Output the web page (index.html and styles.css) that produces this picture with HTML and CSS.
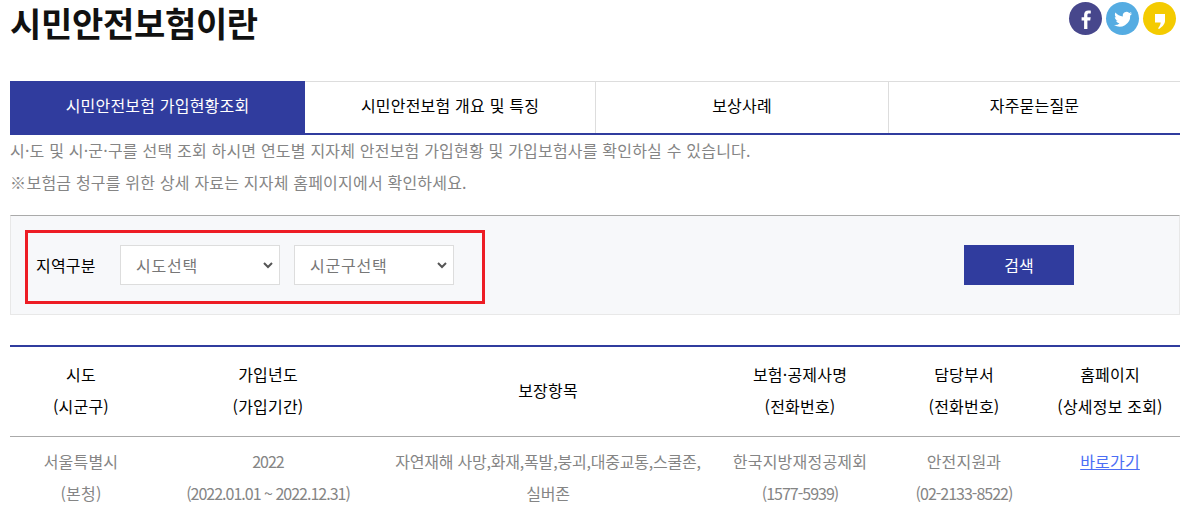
FILE: index.html
```html
<!DOCTYPE html>
<html lang="ko">
<head>
    <meta charset="UTF-8">
    <title>시민안전보험이란</title>
    <link rel="stylesheet" href="styles.css">
</head>
<body>
    <div class="container">
        <!-- Title -->
        <div class="page-head">
            <h1>시민안전보험이란</h1>
            <div class="sns">
                <a class="sns-btn fb" href="#">
                    <svg viewBox="0 0 33 33" width="33" height="33"><path d="M18.400 27v-8.500h2.800l.5-3.300h-3.300v-2c0-1 .3-1.600 1.600-1.600h1.800V8.700c-.4 0-1.400-.1-2.500-.1-2.500 0-4.200 1.500-4.200 4.300v2.300h-2.500v3.300h2.500V27z" fill="#fff"/></svg>
                </a>
                <a class="sns-btn tw" href="#">
                    <svg viewBox="0 0 33 33" width="33" height="33"><path d="M26 11.500c-.7.300-1.400.5-2.100.6.800-.5 1.300-1.200 1.600-2-.7.400-1.500.7-2.300.9a3.700 3.700 0 0 0-6.300 3.400c-3-.2-5.700-1.600-7.500-3.900-.3.600-.5 1.200-.5 1.900 0 1.300.6 2.400 1.600 3.100-.6 0-1.200-.2-1.700-.5 0 1.800 1.300 3.300 3 3.700-.5.100-1.100.2-1.700.1.500 1.500 1.800 2.500 3.400 2.600a7.400 7.400 0 0 1-5.500 1.500 10.500 10.500 0 0 0 16.200-9.300c.7-.5 1.300-1.200 1.800-2.100z" fill="#fff"/></svg>
                </a>
                <a class="sns-btn ks" href="#">
                    <svg viewBox="0 0 33 33" width="33" height="33"><path d="M12 12h10v7c0 3-3 6-6 8l-1-.8c1.500-1.500 2.500-3.500 2.700-5.700H12z" fill="#fff"/></svg>
                </a>
            </div>
        </div>

        <!-- Tabs -->
        <ul class="tabs">
            <li class="tab tab-on">시민안전보험 가입현황조회</li>
            <li class="tab tab-2">시민안전보험 개요 및 특징</li>
            <li class="tab tab-3">보상사례</li>
            <li class="tab tab-4">자주묻는질문</li>
        </ul>

        <div class="desc-box">
            <p class="desc">시·도 및 시·군·구를 선택 조회 하시면 연도별 지자체 안전보험 가입현황 및 가입보험사를 확인하실 수 있습니다.</p>
            <p class="desc"><span class="note-mark">※ </span>보험금 청구를 위한 상세 자료는 지자체 홈페이지에서 확인하세요.</p>
        </div>

        <!-- Search -->
        <form class="search-box">
            <div class="region-mark">
                <label class="region-label">지역구분</label>
                <select class="region-select sel-sido"><option>시도선택</option></select>
                <select class="region-select"><option>시군구선택</option></select>
            </div>
            <button type="button" class="search-btn">검색</button>
        </form>

        <!-- Result table -->
        <table class="result-table">
            <colgroup>
                <col class="c1"><col class="c2"><col class="c3"><col class="c4"><col class="c5"><col class="c6">
            </colgroup>
            <thead>
                <tr>
                    <th>시도<br>(시군구)</th>
                    <th>가입년도<br>(가입기간)</th>
                    <th>보장항목</th>
                    <th>보험·공제사명<br>(전화번호)</th>
                    <th>담당부서<br>(전화번호)</th>
                    <th>홈페이지<br>(상세정보 조회)</th>
                </tr>
            </thead>
            <tbody>
                <tr>
                    <td>서울특별시<br>(본청)</td>
                    <td><span class="num">2022</span><br><span class="num">(2022.01.01 ~ 2022.12.31)</span></td>
                    <td class="items">자연재해 사망,화재,폭발,붕괴,대중교통,스쿨존,<br>실버존</td>
                    <td>한국지방재정공제회<br><span class="num">(1577-5939)</span></td>
                    <td>안전지원과<br><span class="num">(02-2133-8522)</span></td>
                    <td><a href="#">바로가기</a><br>&nbsp;</td>
                </tr>
            </tbody>
        </table>
    </div>
</body>
</html>
```

FILE: styles.css
```css
html, body {
    margin: 0;
    padding: 0;
    background: #fff;
    overflow: hidden;
}

body {
    font-family: "Noto Sans CJK KR", "Noto Sans", sans-serif;
    font-size: 16px;
    letter-spacing: 0.2px;
    color: #000;
}

.container {
    width: 1170px;
    margin-left: 10px;
}

.page-head {
    display: flex;
    justify-content: space-between;
    align-items: flex-start;
    height: 81px;
}

h1 {
    margin: 0;
    font-size: 34px;
    font-weight: 700;
    line-height: 46px;
    letter-spacing: -0.3px;
    color: #111;
}

.sns {
    display: flex;
    gap: 4px;
    margin: 2px 4px 0 0;
}

.sns-btn {
    display: block;
    width: 33px;
    height: 33px;
    border-radius: 50%;
}

.fb { background: #47478c; }
.tw { background: #55ace2; }
.ks { background: #f4cb00; }

.tabs {
    display: flex;
    margin: 0;
    padding: 0;
    list-style: none;
    height: 51px;
    border-top: 1px solid #ddd;
    border-bottom: 2px solid #303c9e;
}

.tab {
    box-sizing: border-box;
    width: 293px;
    line-height: 47px;
    text-align: center;
    border-left: 1px solid #ddd;
}

.tab-on {
    width: 295px;
    margin-top: -1px;
    height: 52px;
    line-height: 48px;
    background: #303c9e;
    color: #fff;
    border-left: 0;
}

.tab-2 { width: 290px; border-left: 0; }
.tab-4 { width: 292px; }

.desc-box {
    height: 64px;
    margin-top: -1px;
}

.desc {
    margin: 0;
    line-height: 32px;
    color: #858585;
}

.note-mark {
    letter-spacing: -2px;
}

.search-box {
    box-sizing: border-box;
    display: flex;
    align-items: flex-start;
    height: 100px;
    margin-top: 17px;
    padding: 14px 0 0 14px;
    background: #f7f8fa;
    border: 1px solid #e8e8e8;
    border-top-color: #aaa;
}

.region-mark {
    box-sizing: border-box;
    display: flex;
    align-items: center;
    width: 460px;
    height: 74px;
    padding: 0 0 4px 8px;
    border: 3px solid #ed1c24;
}

.region-label {
    width: 84px;
}

.region-select {
    box-sizing: border-box;
    width: 160px;
    height: 40px;
    padding-left: 15px;
    background: #fff url("data:image/svg+xml,%3Csvg xmlns='http://www.w3.org/2000/svg' width='10' height='7'%3E%3Cpath d='M1 1l4 4 4-4' fill='none' stroke='%23555' stroke-width='2'/%3E%3C/svg%3E") no-repeat right 6px center;
    border: 1px solid #ddd;
    border-radius: 0;
    font-family: inherit;
    font-size: 16px;
    letter-spacing: 0.8px;
    color: #777;
    appearance: none;
}

.sel-sido {
    margin-right: 14px;
}

.search-btn {
    width: 110px;
    height: 40px;
    margin: 15px 0 0 479px;
    padding: 0;
    background: #303c9e;
    border: 0;
    color: #fff;
    font-family: inherit;
    font-size: 16px;
}

.result-table {
    width: 1170px;
    margin-top: 30px;
    border-collapse: collapse;
    table-layout: fixed;
    border-top: 2px solid #303c9e;
}

.c1 { width: 142px; }
.c2 { width: 232px; }
.c3 { width: 328px; }
.c4 { width: 176px; }
.c5 { width: 152px; }
.c6 { width: 140px; }

.result-table th,
.result-table td {
    line-height: 32px;
    text-align: center;
}

.result-table th {
    padding: 11px 0 14px;
    font-weight: 400;
    border-bottom: 1px solid #aaa;
}

.result-table td {
    padding: 8px 0;
    color: #858585;
}

.result-table .items {
    letter-spacing: -0.2px;
}

.result-table a {
    color: #4c6ef5;
}

.num {
    letter-spacing: -1px;
}
```
